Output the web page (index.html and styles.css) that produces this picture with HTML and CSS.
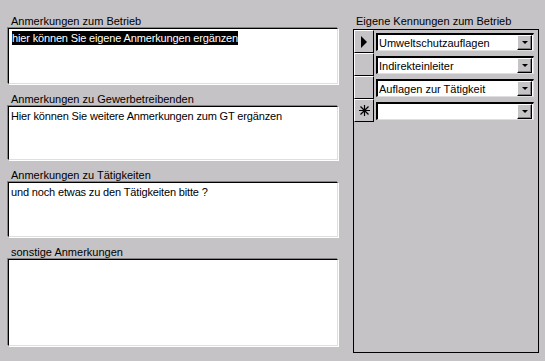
FILE: index.html
```html
<!DOCTYPE html>
<html lang="de">
<head>
  <meta charset="UTF-8" />
  <title>Anmerkungen</title>
  <link rel="stylesheet" href="styles.css">
</head>
<body>
  <div class="form">
    <div class="left">
      <div class="field">
        <label>Anmerkungen zum Betrieb</label>
        <div class="memo memo1"><span class="sel">hier können Sie eigene Anmerkungen ergänzen</span></div>
      </div>
      <div class="field">
        <label>Anmerkungen zu Gewerbetreibenden</label>
        <div class="memo memo2">Hier können Sie weitere Anmerkungen zum GT ergänzen</div>
      </div>
      <div class="field">
        <label>Anmerkungen zu Tätigkeiten</label>
        <div class="memo memo3">und noch etwas zu den Tätigkeiten bitte ?</div>
      </div>
      <div class="field">
        <label>sonstige Anmerkungen</label>
        <div class="memo memo4"></div>
      </div>
    </div>

    <div class="right">
      <label>Eigene Kennungen zum Betrieb</label>
      <div class="subform">
        <div class="row">
          <div class="selector">
            <svg width="8" height="12" viewBox="0 0 8 12"><polygon points="1,0 7,6 1,12" fill="#000"/></svg>
          </div>
          <div class="combo"><span class="val">Umweltschutzauflagen</span><span class="drop"><i></i></span></div>
        </div>
        <div class="row">
          <div class="selector"></div>
          <div class="combo"><span class="val">Indirekteinleiter</span><span class="drop"><i></i></span></div>
        </div>
        <div class="row">
          <div class="selector"></div>
          <div class="combo"><span class="val">Auflagen zur Tätigkeit</span><span class="drop"><i></i></span></div>
        </div>
        <div class="row">
          <div class="selector">
            <svg width="11" height="11" viewBox="0 0 11 11">
              <path d="M5.5 0V11M0 5.5H11M1.5 1.5L9.5 9.5M9.5 1.5L1.5 9.5" stroke="#000" stroke-width="1.2" fill="none"/>
            </svg>
          </div>
          <div class="combo"><span class="val"></span><span class="drop"><i></i></span></div>
        </div>
      </div>
    </div>
  </div>
</body>
</html>
```

FILE: styles.css
```css
body {
  margin: 0;
  background-color: #c6c3c6;
  font-family: "Liberation Sans", Arial, sans-serif;
  font-size: 11px;
  color: #000;
}
.form {
  display: flex;
  padding-top: 15px;
  height: 346px;
}
.left {
  margin-left: 8px;
  width: 330px;
}
.field {
  margin-bottom: 9px;
}
label {
  display: block;
  height: 13px;
  line-height: 13px;
  padding-left: 3px;
}
.memo {
  box-sizing: border-box;
  background: #fff;
  border-top: 1px solid #000;
  border-left: 1px solid #000;
  border-right: 1px solid #dfdfdf;
  border-bottom: 1px solid #dfdfdf;
  box-shadow: -1px -1px 0 #848284, 1px 1px 0 #fff;
  padding: 2px 2px;
  line-height: 14px;
  letter-spacing: -0.15px;
}
.memo1 { height: 56px; }
.memo2 { height: 54px; }
.memo3 { height: 55px; }
.memo4 { height: 87px; }
.sel {
  background: #000;
  color: #fff;
  margin-left: 1px;
  padding: 1px 0;
}
.right {
  margin-left: 15px;
}
.right label {
  padding-left: 3px;
  margin-bottom: 1px;
}
.subform {
  box-sizing: border-box;
  width: 186px;
  height: 324px;
  border: 1px solid #000;
}
.row {
  display: flex;
  height: 23px;
}
.selector {
  box-sizing: border-box;
  width: 20px;
  height: 23px;
  border-top: 1px solid #fff;
  border-left: 1px solid #fff;
  border-right: 1px solid #000;
  border-bottom: 1px solid #000;
  display: flex;
  align-items: center;
  justify-content: center;
}
.combo {
  box-sizing: border-box;
  display: flex;
  align-items: center;
  width: 158px;
  height: 18px;
  margin: 3px 0 0 2px;
  background: #fff;
  border-top: 2px solid #000;
  border-left: 2px solid #000;
  border-right: 1px solid #dfdfdf;
  border-bottom: 1px solid #dfdfdf;
}
.val {
  flex: 1;
  padding-left: 1px;
  white-space: nowrap;
}
.drop {
  box-sizing: border-box;
  width: 15px;
  height: 15px;
  margin-right: 1px;
  background: #c6c3c6;
  border-top: 1px solid #fff;
  border-left: 1px solid #fff;
  border-right: 1px solid #000;
  border-bottom: 1px solid #000;
  box-shadow: inset -1px -1px 0 #848284;
  display: flex;
  align-items: center;
  justify-content: center;
}
.drop i {
  width: 0;
  height: 0;
  border-left: 3px solid transparent;
  border-right: 3px solid transparent;
  border-top: 3px solid #000;
}
```
